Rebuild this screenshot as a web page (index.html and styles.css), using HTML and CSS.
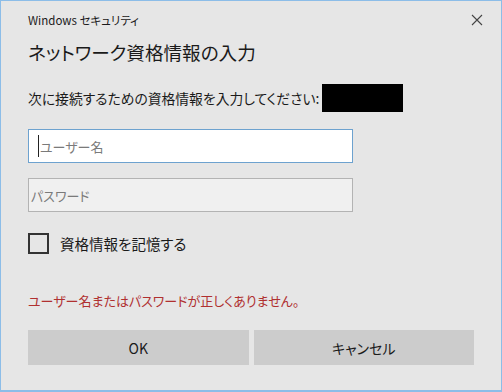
FILE: index.html
```html
<!DOCTYPE html>
<html lang="ja">
<head>
<meta charset="utf-8">
<link rel="stylesheet" href="styles.css">
</head>
<body>
<div class="window">
  <div class="header">
    <span class="app">Windows セキュリティ</span>
    <svg class="close" width="12" height="12" viewBox="0 0 12 12"><path d="M1 1L11 11M11 1L1 11" stroke="#444" stroke-width="1.1" fill="none"/></svg>
  </div>
  <div class="title">ネットワーク資格情報の入力</div>
  <div class="prompt"><span>次に接続するための資格情報を入力してください:</span><span class="redact"></span></div>
  <div class="field active"><span class="caret"></span><span class="ph">ユーザー名</span></div>
  <div class="field pw"><span class="ph">パスワード</span></div>
  <div class="check"><span class="box"></span><span>資格情報を記憶する</span></div>
  <div class="error">ユーザー名またはパスワードが正しくありません。</div>
  <div class="buttons"><div class="btn">OK</div><div class="btn">キャンセル</div></div>
</div>
</body>
</html>
```
FILE: styles.css
```css
html, body { margin: 0; padding: 0; }
body { background: #e6e6e6; font-family: "Noto Sans CJK JP", "Noto Sans", sans-serif; color: #1a1a1a; }
.window {
  width: 502px; height: 392px; box-sizing: border-box;
  border: 1px solid #8cbde8; border-bottom: 2px solid #8cbde8;
  background: #e6e6e6; padding: 0 27px;
  display: flex; flex-direction: column;
  font-feature-settings: "palt";
}
.header { height: 37px; display: flex; align-items: center; justify-content: space-between; }
.app { font-size: 11.5px; }
.close { margin-right: -9px; }
.title { font-size: 18.6px; line-height: 28px; }
.prompt { margin-top: 18px; height: 28px; display: flex; align-items: center; font-size: 13.8px; }
.redact { display: inline-block; width: 81px; height: 28px; background: #000; margin-left: 3px; }
.field { width: 325px; height: 34px; box-sizing: border-box; border: 1px solid #b3b3b3; background: #f0f0f0; display: flex; align-items: center; padding-left: 9px; font-size: 13px; color: #7a7a7a; }
.field.active { margin-top: 17px; background: #fff; border-color: #6da2cf; padding-left: 9px; }
.field.pw { margin-top: 15px; padding-left: 2px; }
.caret { width: 1px; height: 22px; background: #222; margin-right: 1px; }
.check { margin-top: 20px; height: 22px; display: flex; align-items: center; font-size: 14.5px; }
.box { width: 21px; height: 21px; box-sizing: border-box; border: 2px solid #333; margin-right: 11px; }
.error { margin-top: 37px; line-height: 20px; font-size: 13px; color: #b03030; }
.buttons { margin-top: 19px; display: flex; gap: 5px; }
.btn { flex: 1; height: 35px; background: #cccccc; display: flex; align-items: center; justify-content: center; font-size: 14px; }
```
